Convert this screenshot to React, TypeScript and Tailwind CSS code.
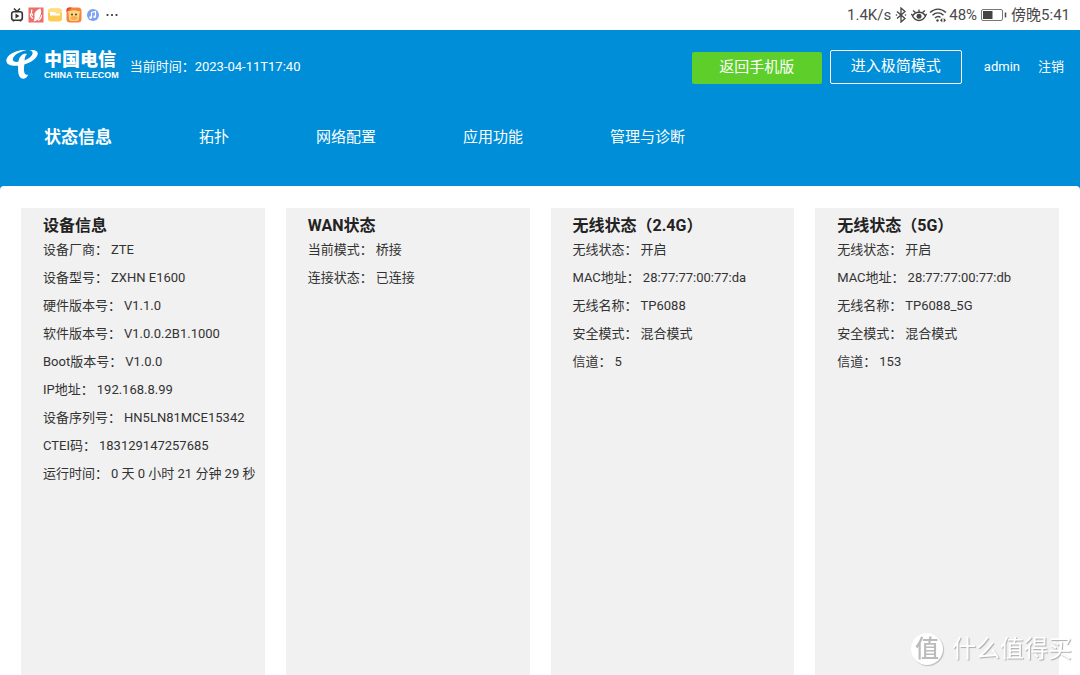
import { ReactNode } from 'react';

interface Field {
  label: string;
  value: string;
}

interface Panel {
  title: string;
  fields: Field[];
}

const navItems = ['状态信息', '拓扑', '网络配置', '应用功能', '管理与诊断'];

const panels: Panel[] = [
  {
    title: '设备信息',
    fields: [
      { label: '设备厂商', value: 'ZTE' },
      { label: '设备型号', value: 'ZXHN E1600' },
      { label: '硬件版本号', value: 'V1.1.0' },
      { label: '软件版本号', value: 'V1.0.0.2B1.1000' },
      { label: 'Boot版本号', value: 'V1.0.0' },
      { label: 'IP地址', value: '192.168.8.99' },
      { label: '设备序列号', value: 'HN5LN81MCE15342' },
      { label: 'CTEI码', value: '183129147257685' },
      { label: '运行时间', value: '0 天 0 小时 21 分钟 29 秒' },
    ],
  },
  {
    title: 'WAN状态',
    fields: [
      { label: '当前模式', value: '桥接' },
      { label: '连接状态', value: '已连接' },
    ],
  },
  {
    title: '无线状态（2.4G）',
    fields: [
      { label: '无线状态', value: '开启' },
      { label: 'MAC地址', value: '28:77:77:00:77:da' },
      { label: '无线名称', value: 'TP6088' },
      { label: '安全模式', value: '混合模式' },
      { label: '信道', value: '5' },
    ],
  },
  {
    title: '无线状态（5G）',
    fields: [
      { label: '无线状态', value: '开启' },
      { label: 'MAC地址', value: '28:77:77:00:77:db' },
      { label: '无线名称', value: 'TP6088_5G' },
      { label: '安全模式', value: '混合模式' },
      { label: '信道', value: '153' },
    ],
  },
];

function Icon({ children }: { children: ReactNode }) {
  return (
    <svg viewBox="0 0 16 16" className="w-4 h-4 shrink-0" fill="none">
      {children}
    </svg>
  );
}

function NotificationIcons() {
  return (
    <div className="flex items-center gap-[3px]">
      <Icon>
        <path d="M5 1.5 8 4.5 11 1.5" stroke="#333" strokeWidth="1.5" />
        <rect x="2.7" y="4.7" width="10.6" height="8.6" rx="2.2" stroke="#333" strokeWidth="1.6" />
        <path d="M6.5 6.5v5l4-2.5z" fill="#333" />
        <path d="M4.5 13.5v1M11.5 13.5v1" stroke="#333" strokeWidth="1.5" />
      </Icon>
      <Icon>
        <rect x="0.5" y="0.5" width="15" height="15" fill="#ed6d68" />
        <path d="M12.5 1.5C8.5 3 6 5.5 6.5 8.5c.3 2 0 3.500-1 6 4.500-1 6.500-3 6.500-6 1.500-1.500 1.500-4 .5-7Z" fill="#fff" />
        <path d="M4 2.500C3 5 3.500 7 5 8.500M2.300 6.500c0 2.500 1 4 2.700 5M13.500 8c0 3-1.500 4.500-3.500 5.500" stroke="#fff" strokeWidth="1.2" />
      </Icon>
      <Icon>
        <rect x="1" y="1.5" width="14" height="13" rx="3" fill="#fdce55" />
        <path d="M1 6V4.500a3 3 0 0 1 3-3h8a3 3 0 0 1 3 3V6z" fill="#ffdd80" />
        <path d="M3 5h5l1 1.500h4v2H3z" fill="#fff" />
      </Icon>
      <Icon>
        <rect x="0.5" y="0.5" width="15" height="15" rx="3.5" fill="#f5853a" />
        <path d="M2.500 6 1.500 4.500l3-.5c2-1 5-1 7 0l3 .5-1 1.500-.5 5.500A2.500 2.500 0 0 1 10.500 14h-5A2.500 2.500 0 0 1 3 11.500z" fill="#ffd482" />
        <ellipse cx="8" cy="11" rx="3.500" ry="2" fill="#f9ae55" />
        <circle cx="6" cy="7.500" r=".9" fill="#4a2c1a" />
        <circle cx="10" cy="7.500" r=".9" fill="#4a2c1a" />
        <path d="M.5 5V3A2.500 2.500 0 0 1 3 .5h3z" fill="#e6413d" />
      </Icon>
      <Icon>
        <circle cx="8" cy="8" r="6" fill="#7ba1f2" />
        <path d="M6.500 10.500V5.500l4-1v5" stroke="#fff" strokeWidth="1.2" />
        <circle cx="5.600" cy="10.600" r="1.300" fill="#fff" />
        <circle cx="9.600" cy="9.700" r="1.300" fill="#fff" />
      </Icon>
      <Icon>
        <circle cx="3.500" cy="8" r="1.1" fill="#333" />
        <circle cx="8" cy="8" r="1.1" fill="#333" />
        <circle cx="12.500" cy="8" r="1.1" fill="#333" />
      </Icon>
    </div>
  );
}

function SystemStatus() {
  return (
    <div className="flex items-center gap-[2px] text-[15px] text-[#4a4a4a]">
      <span>1.4K/s</span>
      <Icon>
        <path d="m4 4.500 8 7L8 15V1l4 3.500-8 7" stroke="#444" strokeWidth="1.3" />
        <circle cx="3.500" cy="8" r=".8" fill="#444" />
        <circle cx="12.500" cy="8" r=".8" fill="#444" />
      </Icon>
      <Icon>
        <path d="M1.500 9C3 6.500 5 5.300 8 5.300S13 6.500 14.500 9C13 11.800 11 13.500 8 13.500S3 11.800 1.500 9Z" stroke="#444" strokeWidth="1.4" />
        <circle cx="8" cy="9.300" r="2.500" fill="#444" />
        <path d="M8 5V2.500M4.500 5.500 2 3.500M11.500 5.500l2.500-2M2 9 .3 7M14 9l1.700-2" stroke="#444" strokeWidth="1.3" />
      </Icon>
      <svg viewBox="0 0 18 16" className="w-[18px] h-4 shrink-0" fill="none">
        <path d="M1 5.500C6 1 12 1 17 5.500M3.500 8.300c3.300-3 7.700-3 11 0M6 11c1.800-1.700 3.800-1.900 5.500-.7" stroke="#444" strokeWidth="1.5" />
        <circle cx="8.500" cy="13.500" r="1.200" fill="#444" />
        <path d="m13.300 11-2.300 2.300 2.300 2.200zM14.700 11l2.300 2.300-2.300 2.200z" fill="#444" />
      </svg>
      <span>48%</span>
      <svg viewBox="0 0 28 14" className="w-7 h-[14px] mx-px shrink-0" fill="none">
        <rect x="1.5" y="1.5" width="21" height="11" rx="1.5" stroke="#777" />
        <rect x="3" y="3" width="9.5" height="8" fill="#444" />
        <path d="M25.500 4.500v5" stroke="#555" strokeWidth="1.6" />
      </svg>
      <span>傍晚5:41</span>
    </div>
  );
}

function Logo() {
  return (
    <div className="flex items-center gap-[6px] pb-1">
      <svg viewBox="0 0 32 32" className="w-8 h-8 shrink-0" fill="#fff">
        <path d="M20.500 1.200C12-.2.500 5.500.3 11.300c-.1 4.500 5.500 6 11.700 5.400.3 3.600-.3 7.300 1.300 10.300 2 4 7 3.600 9-1.500-4.800 1.300-4.600-4.500-4-9.900C25.500 13.500 31.800 8.500 31.800 4.600 31.800 1.400 27.500.3 23 1.600c2.800.3 4 1.500 3.500 3.200-.7 2.700-3.800 4.900-8 6.800.3-3 .9-5 2.500-6.600-3.200-1-7.500 1-8.600 7.800-3.600.5-5.900-.4-5.600-2.600C7.300 6.500 13 2.500 20.500 1.200Z" />
      </svg>
      <div>
        <div className="text-[18px] leading-5 font-black whitespace-nowrap">中国电信</div>
        <div className="font-['Liberation_Sans'] text-[9px] leading-[10px] font-bold whitespace-nowrap">CHINA TELECOM</div>
      </div>
    </div>
  );
}

export default function App() {
  return (
    <div className="min-h-screen flex flex-col bg-white font-['Roboto','Noto_Sans_CJK_SC',sans-serif] text-[#222]">

      {/* Status bar */}
      <div className="h-[30px] shrink-0 flex items-center justify-between pl-[9px] pr-[10px]">
        <NotificationIcons />
        <SystemStatus />
      </div>

      {/* Header */}
      <header className="bg-[#008ed8] text-white">
        <div className="h-[73px] flex items-center pl-[6px] pr-4">
          <Logo />
          <span className="ml-[11px] text-[13px]">当前时间：2023-04-11T17:40</span>
          <div className="ml-auto flex items-end gap-2 text-[15px]">
            <button className="w-[130px] h-8 rounded-[2px] bg-[#5dce2a]">返回手机版</button>
            <button className="w-[132px] h-[34px] rounded-[2px] border border-white">进入极简模式</button>
          </div>
          <div className="ml-[22px] flex gap-[18px] text-[13px]">
            <span>admin</span>
            <a href="#logout">注销</a>
          </div>
        </div>
        <nav className="h-[83px] flex items-start gap-[87px] pl-11 pt-[22px]">
          {navItems.map((item, i) => (
            <a
              key={item}
              href={`#${item}`}
              className={i === 0 ? 'text-[17px] leading-6 font-bold' : 'text-[15px] leading-6'}
            >
              {item}
            </a>
          ))}
        </nav>
      </header>

      {/* Panels */}
      <div className="flex-1 flex bg-[#008ed8]">
        <main className="flex-1 grid grid-cols-4 gap-[21px] bg-white rounded-t-[4px] px-[21px] pt-[22px]">
          {panels.map((panel) => (
            <section key={panel.title} className="bg-[#f1f1f1] pl-[22px] pt-[6px]">
              <h2 className="text-[16px] leading-6 font-bold">{panel.title}</h2>
              <dl className="text-[13px]">
                {panel.fields.map((field) => (
                  <div key={field.label} className="flex gap-[3px] h-7 leading-6 whitespace-nowrap text-[#333]">
                    <dt>{field.label}：</dt>
                    <dd>{field.value}</dd>
                  </div>
                ))}
              </dl>
            </section>
          ))}
        </main>
      </div>

      {/* Watermark */}
      <div className="fixed right-2 bottom-2 flex items-center gap-[9px] text-white">
        <span className="w-8 h-8 rounded-full bg-white text-[#bbb] text-[24px] leading-8 font-medium text-center shadow-[1px_1px_1px_#bbb]">
          值
        </span>
        <span className="text-[24px] leading-9 [text-shadow:1px_1px_1px_#aaa]">什么值得买</span>
      </div>
    </div>
  );
}
